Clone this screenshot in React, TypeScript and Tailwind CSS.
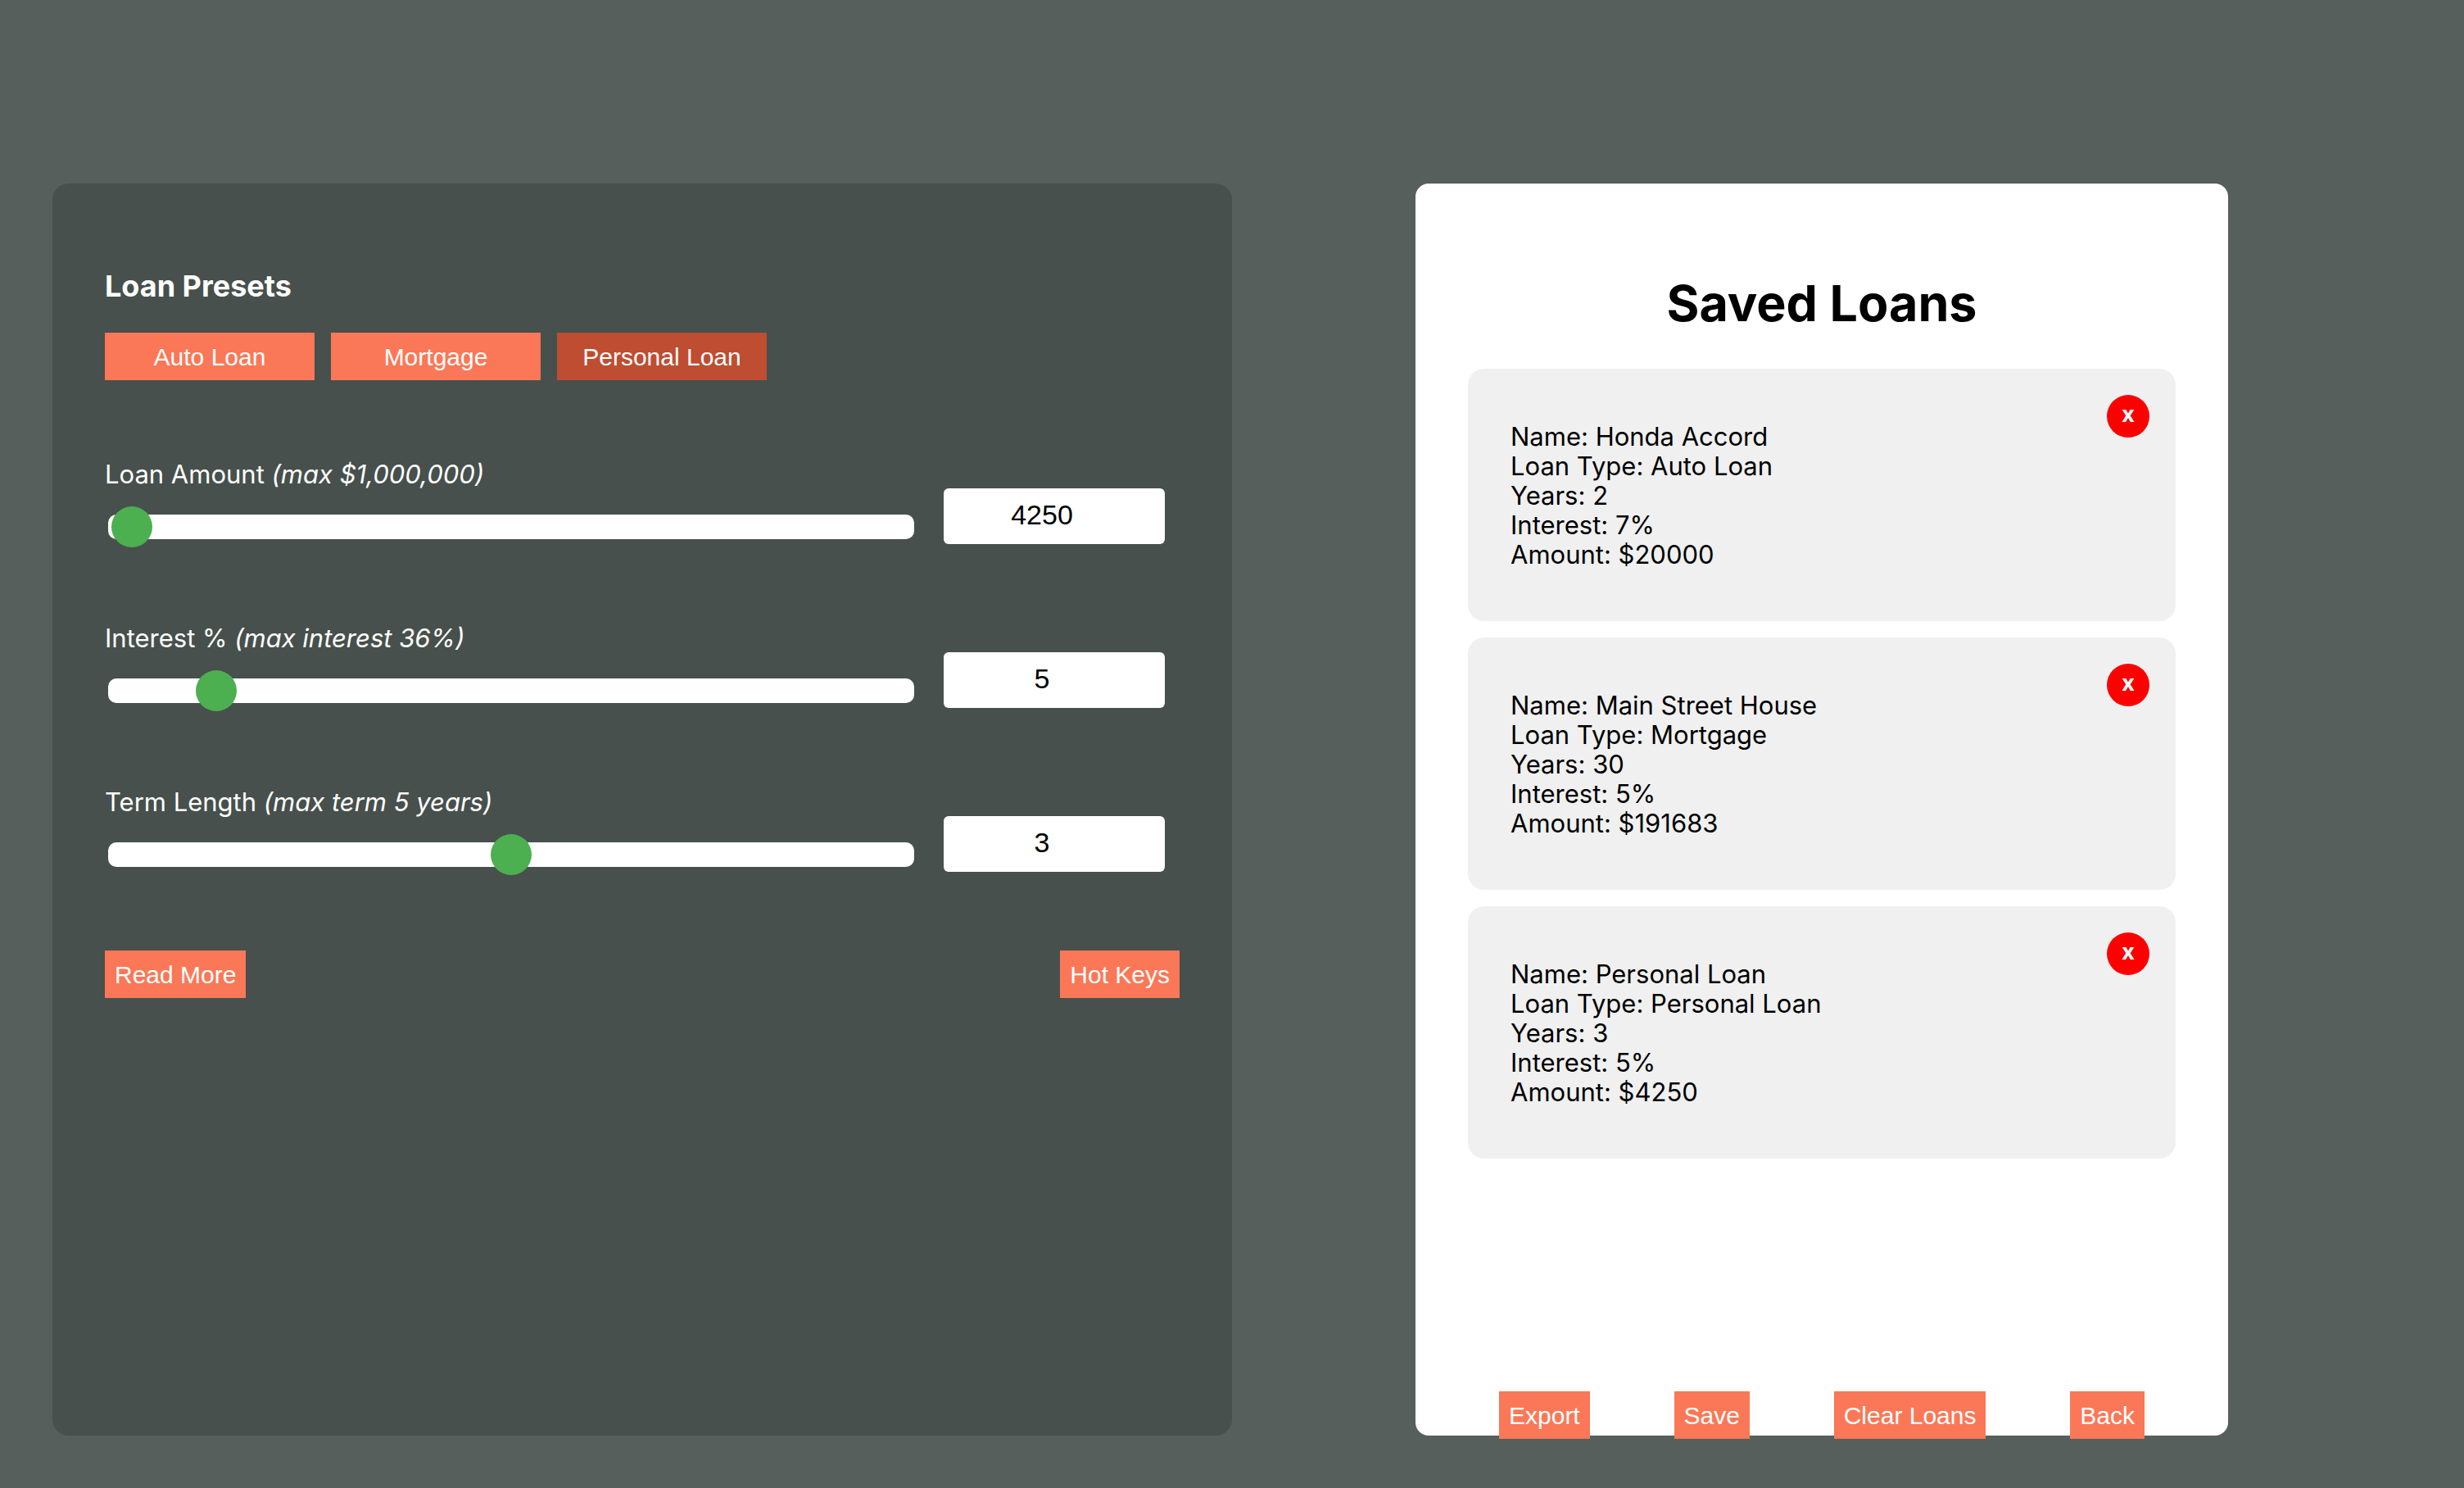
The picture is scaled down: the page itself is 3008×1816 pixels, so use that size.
import { useState } from "react";

type Field = {
  id: string;
  label: string;
  hint: string;
  min: number;
  max: number;
  initial: number;
};

const presets = ["Auto Loan", "Mortgage", "Personal Loan"];

const fields: Field[] = [
  { id: "amount", label: "Loan Amount", hint: "(max $1,000,000)", min: 0, max: 1000000, initial: 4250 },
  { id: "interest", label: "Interest %", hint: "(max interest 36%)", min: 1, max: 36, initial: 5 },
  { id: "term", label: "Term Length", hint: "(max term 5 years)", min: 1, max: 5, initial: 3 },
];

const initialLoans = [
  { name: "Honda Accord", type: "Auto Loan", years: 2, interest: 7, amount: 20000 },
  { name: "Main Street House", type: "Mortgage", years: 30, interest: 5, amount: 191683 },
  { name: "Personal Loan", type: "Personal Loan", years: 3, interest: 5, amount: 4250 },
];

function ActionButton({ children }: { children: string }) {
  return (
    <button
      type="button"
      className="h-[58px] bg-[#fa7857] px-3 pt-0.5 font-['Liberation_Sans',Arial,sans-serif] text-[30px] leading-none whitespace-nowrap text-white"
    >
      {children}
    </button>
  );
}

function LoanField({ field }: { field: Field }) {
  const [value, setValue] = useState(field.initial);
  return (
    <div className="flex items-end gap-8">
      <div className="flex min-w-0 flex-1 flex-col pb-1.5">
        <label htmlFor={field.id} className="text-[31px] leading-[42px]">
          {field.label} <i>{field.hint}</i>
        </label>
        <input
          id={field.id}
          type="range"
          min={field.min}
          max={field.max}
          value={value}
          onChange={(e) => setValue(Number(e.target.value))}
          className="mx-1 mt-7 h-[30px] appearance-none rounded-[10px] bg-white [&::-webkit-slider-thumb]:size-[50px] [&::-webkit-slider-thumb]:appearance-none [&::-webkit-slider-thumb]:rounded-full [&::-webkit-slider-thumb]:bg-[#4caf50]"
        />
      </div>
      <input
        type="number"
        aria-label={field.label}
        min={field.min}
        max={field.max}
        value={value}
        onChange={(e) => setValue(Number(e.target.value))}
        className="mr-[18px] h-[68px] w-[270px] appearance-none rounded-md bg-white pr-[30px] pb-1 text-center font-['Liberation_Sans',Arial,sans-serif] text-[34px] text-black [&::-webkit-inner-spin-button]:appearance-none"
      />
    </div>
  );
}

export default function App() {
  const [preset, setPreset] = useState("Personal Loan");
  const [loans, setLoans] = useState(initialLoans);

  return (
    <main className="flex min-h-screen bg-[#565f5b] pt-56 pb-16 font-['Inter',sans-serif]">
      <div className="flex w-1/2 pl-16">
        <section className="flex-1 rounded-[20px] bg-[#47504c] p-16 text-white">
          <h2 className="mt-[39px] text-4xl leading-[44px] font-bold">Loan Presets</h2>
          <div className="mt-[35px] flex gap-5">
            {presets.map((name) => (
              <button
                key={name}
                type="button"
                aria-pressed={name === preset}
                onClick={() => setPreset(name)}
                className="h-[58px] w-64 bg-[#fa7857] pt-0.5 font-['Liberation_Sans',Arial,sans-serif] text-[30px] leading-none aria-pressed:bg-[#be4d32]"
              >
                {name}
              </button>
            ))}
          </div>
          <div className="mt-[94px] flex flex-col gap-[94px]">
            {fields.map((field) => (
              <LoanField key={field.id} field={field} />
            ))}
          </div>
          <div className="mt-24 flex justify-between">
            <ActionButton>Read More</ActionButton>
            <ActionButton>Hot Keys</ActionButton>
          </div>
        </section>
      </div>

      <div className="flex w-1/2 pr-72 pl-56">
        <section className="flex flex-1 flex-col rounded-[16px] bg-white px-16 pt-[106px] text-black">
          <h1 className="text-center text-[61px] leading-[80px] font-bold">Saved Loans</h1>
          <ul className="mt-10 flex flex-col gap-5">
            {loans.map((loan) => (
              <li
                key={loan.name}
                className="relative rounded-[20px] bg-[#f0f0f0] px-[52px] pt-[65px] pb-[63px] text-[31px] leading-9"
              >
                <p>Name: {loan.name}</p>
                <p>Loan Type: {loan.type}</p>
                <p>Years: {loan.years}</p>
                <p>Interest: {loan.interest}%</p>
                <p>Amount: ${loan.amount}</p>
                <button
                  type="button"
                  aria-label={`Delete ${loan.name}`}
                  onClick={() => setLoans(loans.filter((l) => l !== loan))}
                  className="absolute top-8 right-8 flex size-[52px] items-center justify-center rounded-full bg-[#ff0000] pb-1.5 font-['Open_Sans',sans-serif] text-[26px] leading-none font-bold text-white"
                >
                  x
                </button>
              </li>
            ))}
          </ul>
          <div className="mt-auto -mb-1 flex justify-between px-[38px]">
            <ActionButton>Export</ActionButton>
            <ActionButton>Save</ActionButton>
            <ActionButton>Clear Loans</ActionButton>
            <ActionButton>Back</ActionButton>
          </div>
        </section>
      </div>
    </main>
  );
}
